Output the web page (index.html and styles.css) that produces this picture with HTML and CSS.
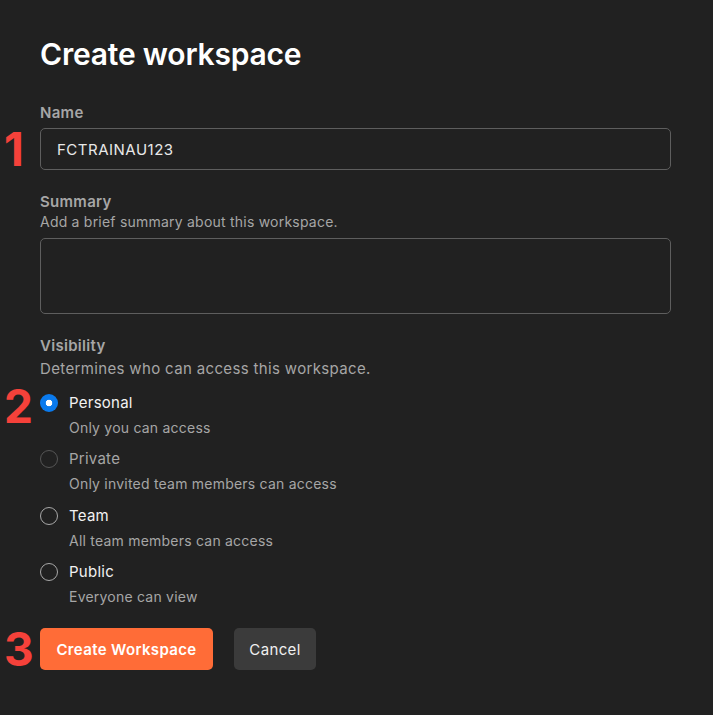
FILE: index.html
```html
<!DOCTYPE html>
<html>
<head>
<meta charset="utf-8">
<link rel="stylesheet" href="styles.css">
</head>
<body>
<main class="page">
  <h1 class="title">Create workspace</h1>

  <section class="field field-name">
    <label class="label">Name</label>
    <div class="input">FCTRAINAU123</div>
    <span class="marker marker-1">1</span>
  </section>

  <section class="field field-summary">
    <label class="label">Summary</label>
    <p class="hint">Add a brief summary about this workspace.</p>
    <div class="textarea"></div>
  </section>

  <section class="field field-visibility">
    <label class="label">Visibility</label>
    <p class="hint hint-lg">Determines who can access this workspace.</p>
    <div class="options">
      <span class="marker marker-2">2</span>
      <div class="option">
        <span class="radio checked"></span>
        <span class="opt-title">Personal</span>
        <span class="opt-desc">Only you can access</span>
      </div>
      <div class="option disabled">
        <span class="radio"></span>
        <span class="opt-title">Private</span>
        <span class="opt-desc">Only invited team members can access</span>
      </div>
      <div class="option">
        <span class="radio"></span>
        <span class="opt-title">Team</span>
        <span class="opt-desc">All team members can access</span>
      </div>
      <div class="option">
        <span class="radio"></span>
        <span class="opt-title">Public</span>
        <span class="opt-desc">Everyone can view</span>
      </div>
    </div>
  </section>

  <div class="actions">
    <span class="marker marker-3">3</span>
    <button class="btn btn-primary">Create Workspace</button>
    <button class="btn btn-secondary">Cancel</button>
  </div>
</main>
</body>
</html>
```

FILE: styles.css
```css
* { box-sizing: border-box; }
html, body { margin: 0; padding: 0; background: #212121; }
body {
  font-family: Inter, "Noto Sans", sans-serif;
  color: #f0f0f0;
  height: 715px;
  overflow: hidden;
}
.page {
  width: 671px;
  padding: 35px 0 0 40px;
}
.title {
  margin: 0;
  font-size: 30px;
  line-height: 38px;
  font-weight: 600;
  color: #ffffff;
  letter-spacing: -0.2px;
}
.field { position: relative; }
.field-name { margin-top: 30px; }
.label {
  display: block;
  font-size: 15px;
  line-height: 20px;
  font-weight: 600;
  color: #a6a6a6;
  letter-spacing: 0.3px;
}
.input {
  margin-top: 5px;
  height: 42px;
  border: 1px solid #5e5e5e;
  border-radius: 5px;
  padding: 0 16px;
  display: flex;
  align-items: center;
  font-size: 15px;
  letter-spacing: 0.5px;
  color: #e8e8e8;
}
.field-summary { margin-top: 21.5px; }
.hint {
  margin: 0;
  font-size: 14px;
  line-height: 20px;
  letter-spacing: 0.22px;
  color: #a6a6a6;
}
.hint-lg {
  margin-top: 2px;
  font-size: 15px;
  line-height: 22px;
  letter-spacing: 0.35px;
}
.textarea {
  margin-top: 6px;
  height: 76px;
  border: 1px solid #5e5e5e;
  border-radius: 5px;
}
.field-visibility { margin-top: 22px; }
.options {
  position: relative;
  margin-top: 13.5px;
  display: flex;
  flex-direction: column;
  gap: 11.33px;
}
.option {
  display: grid;
  grid-template-columns: 18px 1fr;
  column-gap: 11px;
  row-gap: 5px;
  align-items: center;
}
.radio {
  width: 18px;
  height: 18px;
  border-radius: 50%;
  border: 1.5px solid #a8a8a8;
}
.radio.checked {
  border: none;
  background: radial-gradient(circle, #ffffff 0 3px, #0a7aed 3.6px);
}
.opt-title {
  font-size: 15px;
  line-height: 20px;
  letter-spacing: 0.25px;
  color: #f2f2f2;
}
.opt-desc {
  grid-column: 2;
  font-size: 14px;
  line-height: 20px;
  letter-spacing: 0.22px;
  color: #a6a6a6;
}
.option.disabled .radio { border-color: #555555; }
.option.disabled .opt-title { color: #a6a6a6; }
.actions {
  position: relative;
  margin-top: 21.2px;
  display: flex;
  gap: 21px;
}
.btn {
  height: 42px;
  border: none;
  border-radius: 5px;
  font-family: Inter, "Noto Sans", sans-serif;
  font-size: 15px;
  letter-spacing: 0.35px;
  padding: 0;
}
.btn-primary {
  width: 173px;
  background: #ff6c37;
  color: #ffffff;
  font-weight: 600;
}
.btn-secondary {
  width: 82px;
  background: #3b3b3b;
  color: #f0f0f0;
}
.marker {
  position: absolute;
  left: -36px;
  font-size: 46px;
  font-weight: 700;
  line-height: 46px;
  color: #f5413a;
}
.marker-1 { top: 22.6px; }
.marker-2 { top: -10px; }
.marker-3 { top: -2.4px; }
```
